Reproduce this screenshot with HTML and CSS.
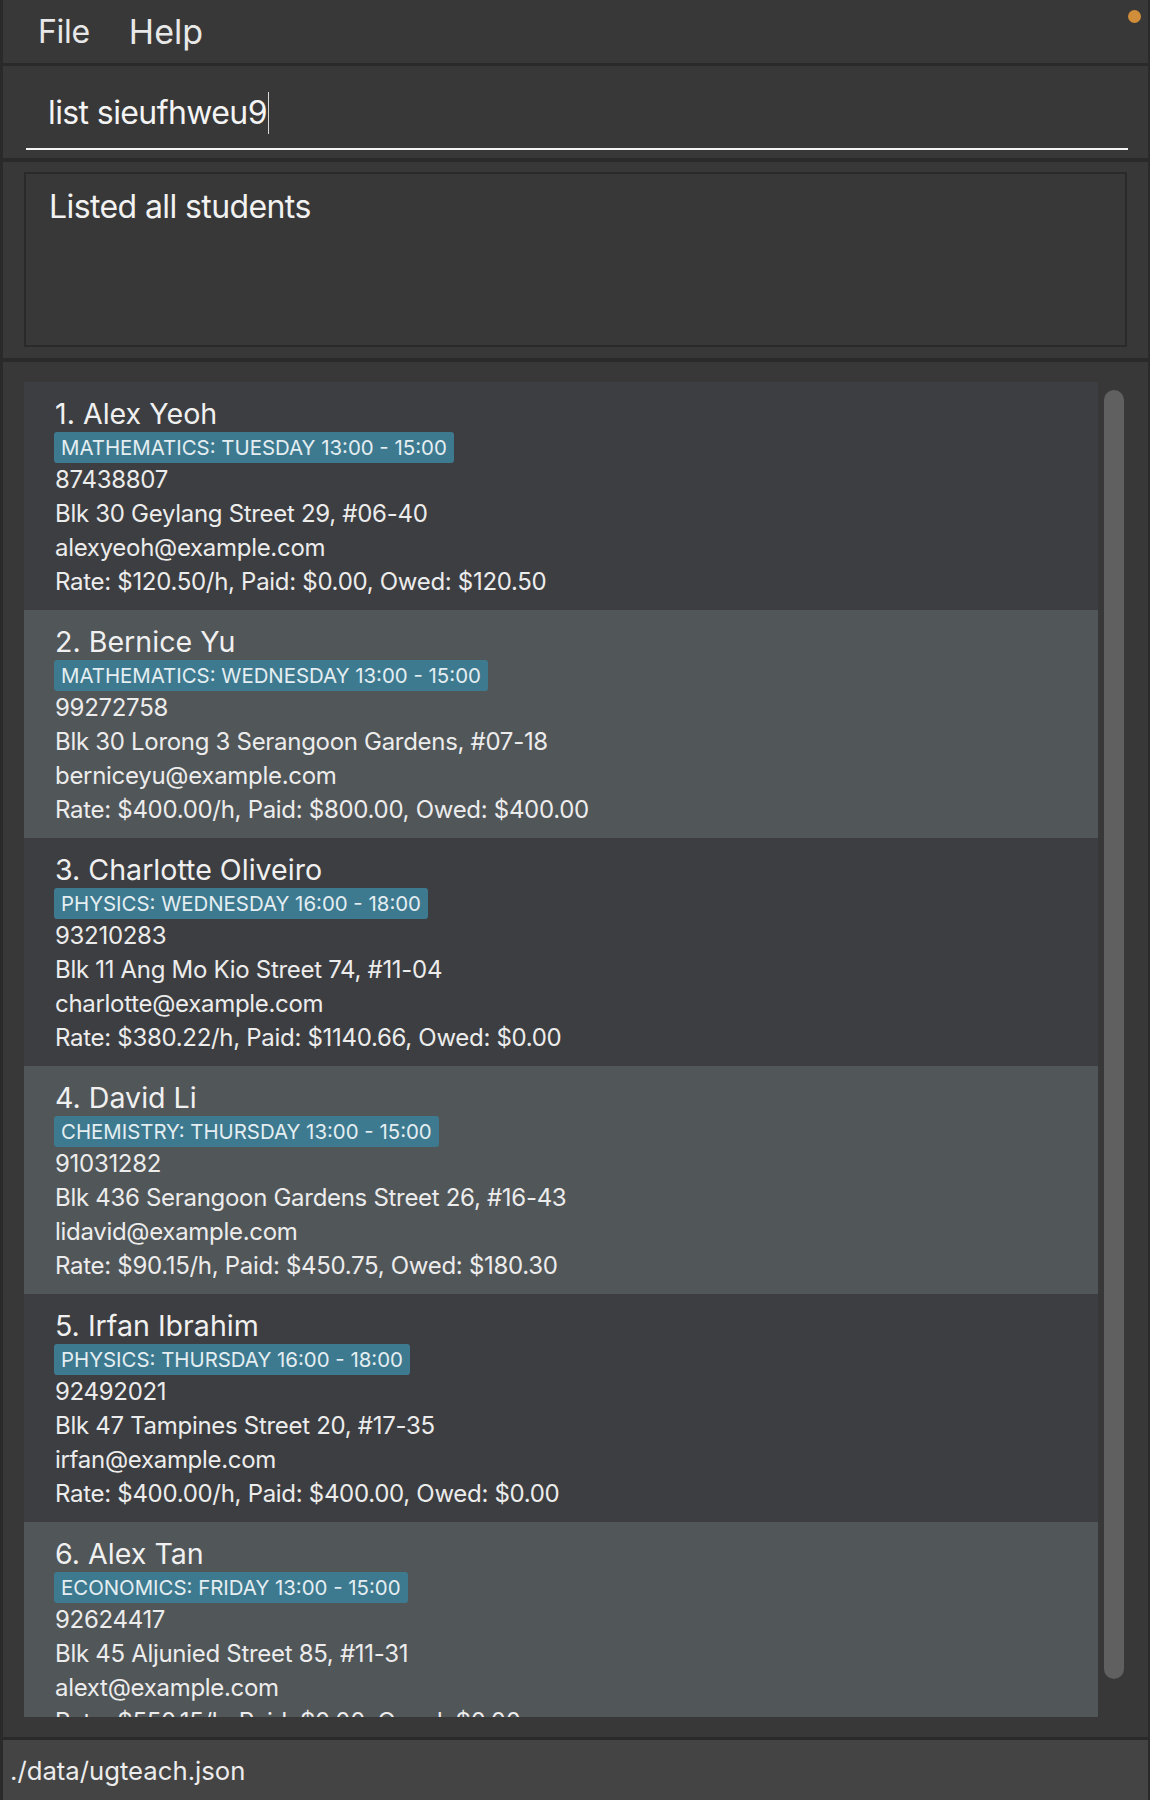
FILE: index.html
```html
<!DOCTYPE html>
<html>
<head>
<meta charset="utf-8">
<link rel="stylesheet" href="styles.css">
</head>
<body>
<div class="app">
  <div class="menubar">
    <span class="menu-item">File</span>
    <span class="menu-item help">Help</span>
    <span class="dot"></span>
  </div>
  <div class="command">
    <div class="cmd-text">list sieufhweu9<span class="caret"></span></div>
    <div class="cmd-line"></div>
  </div>
  <div class="result">
    <div class="result-box">Listed all students</div>
  </div>
  <div class="list">
    <div class="cards">
      <div class="card odd">
        <div class="name">1. Alex Yeoh</div>
        <div class="tag">MATHEMATICS: TUESDAY 13:00 - 15:00</div>
        <div class="line">87438807</div>
        <div class="line">Blk 30 Geylang Street 29, #06-40</div>
        <div class="line">alexyeoh@example.com</div>
        <div class="line">Rate: $120.50/h, Paid: $0.00, Owed: $120.50</div>
      </div>
      <div class="card even">
        <div class="name">2. Bernice Yu</div>
        <div class="tag">MATHEMATICS: WEDNESDAY 13:00 - 15:00</div>
        <div class="line">99272758</div>
        <div class="line">Blk 30 Lorong 3 Serangoon Gardens, #07-18</div>
        <div class="line">berniceyu@example.com</div>
        <div class="line">Rate: $400.00/h, Paid: $800.00, Owed: $400.00</div>
      </div>
      <div class="card odd">
        <div class="name">3. Charlotte Oliveiro</div>
        <div class="tag">PHYSICS: WEDNESDAY 16:00 - 18:00</div>
        <div class="line">93210283</div>
        <div class="line">Blk 11 Ang Mo Kio Street 74, #11-04</div>
        <div class="line">charlotte@example.com</div>
        <div class="line">Rate: $380.22/h, Paid: $1140.66, Owed: $0.00</div>
      </div>
      <div class="card even">
        <div class="name">4. David Li</div>
        <div class="tag">CHEMISTRY: THURSDAY 13:00 - 15:00</div>
        <div class="line">91031282</div>
        <div class="line">Blk 436 Serangoon Gardens Street 26, #16-43</div>
        <div class="line">lidavid@example.com</div>
        <div class="line">Rate: $90.15/h, Paid: $450.75, Owed: $180.30</div>
      </div>
      <div class="card odd">
        <div class="name">5. Irfan Ibrahim</div>
        <div class="tag">PHYSICS: THURSDAY 16:00 - 18:00</div>
        <div class="line">92492021</div>
        <div class="line">Blk 47 Tampines Street 20, #17-35</div>
        <div class="line">irfan@example.com</div>
        <div class="line">Rate: $400.00/h, Paid: $400.00, Owed: $0.00</div>
      </div>
      <div class="card even">
        <div class="name">6. Alex Tan</div>
        <div class="tag">ECONOMICS: FRIDAY 13:00 - 15:00</div>
        <div class="line">92624417</div>
        <div class="line">Blk 45 Aljunied Street 85, #11-31</div>
        <div class="line">alext@example.com</div>
        <div class="line">Rate: $550.15/h, Paid: $0.00, Owed: $0.00</div>
      </div>
    </div>
    <div class="scrollbar"><div class="thumb"></div></div>
  </div>
  <div class="status">./data/ugteach.json</div>
</div>
</body>
</html>
```

FILE: styles.css
```css
* { box-sizing: border-box; }
html, body {
  margin: 0;
  padding: 0;
  background: #383838;
}
body {
  font-family: Inter, "Open Sans", sans-serif;
  color: #ececec;
}
.app {
  width: 1150px;
  height: 1800px;
  display: flex;
  flex-direction: column;
  border-left: 3px solid #2a2a2a;
  border-right: 2px solid #2a2a2a;
  background: #383838;
  overflow: hidden;
}
.menubar {
  height: 63px;
  flex: none;
  display: flex;
  align-items: center;
  padding-left: 35px;
  font-size: 32px;
  line-height: 63px;
  color: #e8e8e8;
  position: relative;
  letter-spacing: -0.3px;
}
.menu-item.help {
  margin-left: 39px;
  font-size: 34px;
  letter-spacing: 0;
}
.dot {
  position: absolute;
  right: 7px;
  top: 10px;
  width: 13px;
  height: 13px;
  border-radius: 50%;
  background: #d08d3a;
}
.command {
  height: 95px;
  flex: none;
  border-top: 3px solid #2a2a2a;
  padding: 26px 20px 0 23px;
}
.cmd-text {
  font-size: 32px;
  line-height: 40px;
  padding-left: 22px;
  color: #f4f4f4;
  letter-spacing: -0.6px;
  display: flex;
  align-items: center;
}
.caret {
  display: inline-block;
  width: 1px;
  height: 42px;
  background: #d8d8d8;
  margin-left: 1px;
}
.cmd-line {
  margin-top: 14px;
  height: 2px;
  background: #f4f4f4;
}
.result {
  height: 200px;
  flex: none;
  border-top: 4px solid #2a2a2a;
  padding: 10px 21px 0 21px;
}
.result-box {
  height: 175px;
  border: 2px solid #2a2a2a;
  padding: 14px 23px;
  font-size: 32px;
  line-height: 38px;
  color: #f2f2f2;
  letter-spacing: -0.6px;
}
.list {
  height: 1379px;
  flex: none;
  border-top: 4px solid #2a2a2a;
  padding: 20px 22px 0 21px;
  display: flex;
  gap: 6px;
  align-items: flex-start;
}
.cards {
  width: 1074px;
  height: 1335px;
  overflow: hidden;
  flex: none;
}
.card {
  height: 228px;
  padding: 15px 0 0 31px;
}
.card.odd { background: #3d3e41; }
.card.even { background: #515659; }
.name {
  font-size: 28.6px;
  line-height: 34px;
  color: #f0f0f0;
  letter-spacing: 0;
}
.tag {
  display: inline-block;
  margin: 1px 0 0 -1px;
  height: 31px;
  padding: 0 7px;
  border-radius: 3px;
  background: #3e7a8f;
  font-size: 20.4px;
  line-height: 31px;
  color: #e4eef2;
  letter-spacing: 0;
}
.line {
  font-size: 24px;
  line-height: 34px;
  color: #ececec;
  letter-spacing: -0.3px;
}
.line:first-of-type { margin-top: 1px; }
.scrollbar {
  width: 20px;
  flex: none;
  padding-top: 8px;
}
.thumb {
  height: 1289px;
  border-radius: 10px;
  background: #606060;
}
.status {
  height: 63px;
  flex: none;
  border-top: 3px solid #2a2a2a;
  background: #444444;
  padding: 2px 0 0 7px;
  font-size: 25.7px;
  line-height: 58px;
  color: #ececec;
  letter-spacing: 0;
}
```
